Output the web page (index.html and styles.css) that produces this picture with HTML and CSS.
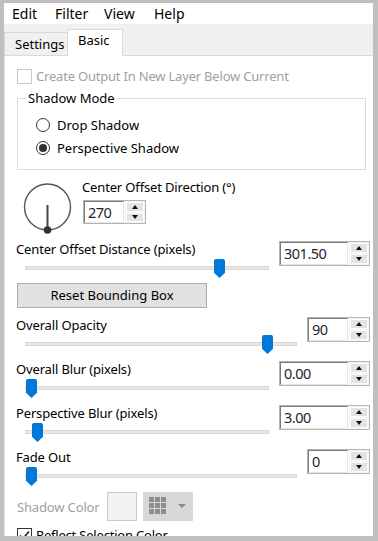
FILE: index.html
```html
<!DOCTYPE html>
<html>
<head>
<meta charset="utf-8">
<link rel="stylesheet" href="styles.css">
</head>
<body>
<div class="win">
  <div class="menubar">
    <span class="mi m-edit">Edit</span><span class="mi m-filter">Filter</span><span class="mi m-view">View</span><span class="mi">Help</span>
  </div>
  <div class="tabstrip">
    <div class="tab">Settings</div>
    <div class="tab active">Basic</div>
  </div>
  <div class="panel">
    <div class="check disabled"><span class="box"></span><span>Create Output In New Layer Below Current</span></div>

    <fieldset class="group">
      <legend>Shadow Mode</legend>
      <div class="radio first"><span class="rb"></span><span>Drop Shadow</span></div>
      <div class="radio"><span class="rb on"></span><span>Perspective Shadow</span></div>
    </fieldset>

    <div class="dialrow">
      <svg class="dial" width="50" height="54" viewBox="0 0 50 54">
        <circle cx="25.5" cy="26" r="23" fill="none" stroke="#555" stroke-width="1.4"/>
        <line x1="25.5" y1="24" x2="25.5" y2="48" stroke="#444" stroke-width="2"/>
        <circle cx="25.5" cy="49" r="3.8" fill="#333"/>
      </svg>
      <div class="dialside">
        <div class="lbl">Center Offset Direction (°)</div>
        <div class="spin narrow dialspin"><div class="val">270</div><div class="btns"><span class="up"></span><span class="dn"></span></div></div>
      </div>
    </div>

    <div class="srow">
      <div class="sl">
        <div class="lbl">Center Offset Distance (pixels)</div>
        <div class="track"><span class="thumb" style="left:188px"></span></div>
      </div>
      <div class="spin wide"><div class="val">301.50</div><div class="btns"><span class="up"></span><span class="dn"></span></div></div>
    </div>

    <div class="resetbtn">Reset Bounding Box</div>

    <div class="srow after-btn">
      <div class="sl">
        <div class="lbl">Overall Opacity</div>
        <div class="track"><span class="thumb" style="left:236px"></span></div>
      </div>
      <div class="spin narrow"><div class="val">90</div><div class="btns"><span class="up"></span><span class="dn"></span></div></div>
    </div>

    <div class="srow gap">
      <div class="sl">
        <div class="lbl">Overall Blur (pixels)</div>
        <div class="track"><span class="thumb" style="left:0px"></span></div>
      </div>
      <div class="spin wide"><div class="val">0.00</div><div class="btns"><span class="up"></span><span class="dn"></span></div></div>
    </div>

    <div class="srow gap">
      <div class="sl">
        <div class="lbl">Perspective Blur (pixels)</div>
        <div class="track"><span class="thumb" style="left:6px"></span></div>
      </div>
      <div class="spin wide"><div class="val">3.00</div><div class="btns"><span class="up"></span><span class="dn"></span></div></div>
    </div>

    <div class="srow gap">
      <div class="sl">
        <div class="lbl">Fade Out</div>
        <div class="track"><span class="thumb" style="left:0px"></span></div>
      </div>
      <div class="spin narrow"><div class="val">0</div><div class="btns"><span class="up"></span><span class="dn"></span></div></div>
    </div>

    <div class="colorrow">
      <span class="clabel">Shadow Color</span>
      <span class="swatch"></span>
      <span class="picker">
        <svg width="46" height="29" viewBox="0 0 46 29">
          <g fill="#8e8e8e">
            <rect x="6" y="5" width="5" height="5"/><rect x="12" y="5" width="5" height="5"/><rect x="18" y="5" width="5" height="5"/>
            <rect x="6" y="11" width="5" height="5"/><rect x="12" y="11" width="5" height="5"/><rect x="18" y="11" width="5" height="5"/>
            <rect x="6" y="17" width="5" height="5"/><rect x="12" y="17" width="5" height="5"/><rect x="18" y="17" width="5" height="5"/>
          </g>
          <path d="M35 12 L43 12 L39 16 Z" fill="#8a8a8a"/>
        </svg>
      </span>
    </div>

    <div class="check reflect"><span class="box checked">
      <svg width="13" height="13" viewBox="0 0 13 13"><path d="M2 6.5 L5 9.5 L11 2.5" fill="none" stroke="#222" stroke-width="1.6"/></svg>
    </span><span>Reflect Selection Color</span></div>
  </div>
</div>
</body>
</html>
```

FILE: styles.css
```css
* { box-sizing: border-box; }
html, body { margin: 0; padding: 0; }
body {
  font-family: "Noto Sans", "DejaVu Sans", sans-serif;
  font-size: 13px;
  color: #000;
  background: #bfbfbf;
}
.win {
  width: 378px;
  height: 541px;
  border-style: solid;
  border-color: #bfbfbf;
  border-width: 3px 5px 5px 4px;
  background: #fff;
  display: flex;
  flex-direction: column;
  overflow: hidden;
}
.menubar {
  height: 21px;
  flex: none;
  display: flex;
  padding-left: 8px;
  font-size: 14px;
  line-height: 21px;
  background: #fff;
}
.mi { padding-left: 0; }
.m-edit { width: 43px; }
.m-filter { width: 49px; }
.m-view { width: 50px; }

.tabstrip {
  height: 31px;
  flex: none;
  background: #f0f0f0;
  display: flex;
  align-items: flex-end;
}
.tab {
  width: 64px;
  height: 23px;
  border: 1px solid #d9d9d9;
  border-bottom: none;
  padding: 3px 0 0 10px;
  line-height: 16px;
  background: #f0f0f0;
}
.tab.active {
  width: 56px;
  height: 27px;
  margin-left: -1px;
  margin-bottom: -1px;
  padding-top: 2px;
  background: #fff;
  position: relative;
  z-index: 1;
}

.panel {
  flex: 1;
  min-height: 0;
  border-top: 1px solid #d9d9d9;
  border-left: 1px solid #e2e2e2;
  padding: 12px 3px 0 12px;
  display: flex;
  flex-direction: column;
  overflow: hidden;
}

.check {
  display: flex;
  align-items: center;
  height: 16px;
  line-height: 16px;
  flex: none;
  letter-spacing: -0.2px;
}
.check .box {
  width: 15px;
  height: 15px;
  border: 1px solid #333;
  background: #fff;
  margin-right: 4px;
  display: flex;
  align-items: center;
  justify-content: center;
}
.check.disabled { color: #a0a0a0; }
.check.disabled .box { border-color: #c8c8c8; }

.group {
  margin: 6px 4px 0 0;
  padding: 0 0 13px 0;
  border: 1px solid #dcdcdc;
  min-width: 0;
  flex: none;
}
.group legend {
  margin-left: 8px;
  padding: 0 2px;
  line-height: 16px;
}
.radio {
  display: flex;
  align-items: center;
  height: 16px;
  line-height: 16px;
  margin: 7px 0 0 18px;
}
.radio.first { margin-top: 11px; }
.rb {
  width: 14px;
  height: 14px;
  border: 1px solid #333;
  border-radius: 50%;
  margin-right: 7px;
  display: flex;
  align-items: center;
  justify-content: center;
}
.rb.on::after {
  content: "";
  width: 8px;
  height: 8px;
  border-radius: 50%;
  background: #333;
}

.dialrow {
  display: flex;
  height: 56px;
  margin-top: 9px;
  flex: none;
}
.dial { margin: 2px 0 0 5px; flex: none; }
.dialside { margin-left: 10px; }
.lbl {
  line-height: 16px;
  margin-left: -1px;
  white-space: nowrap;
  letter-spacing: -0.15px;
}
.dialside .lbl { margin-left: 0; }
.spin.dialspin { margin: 5px 0 0 1px; height: 24px; }

.spin {
  display: flex;
  height: 25px;
  border: 1px solid #b4b4b4;
  background: #fff;
  flex: none;
}
.spin.wide { width: 91px; }
.spin.narrow { width: 63px; }
.spin .val {
  flex: 1;
  border-top: 1px solid #7a7a7a;
  border-left: 1px solid #7a7a7a;
  border-right: 1px solid #e6e6e6;
  border-bottom: 1px solid #e6e6e6;
  padding-left: 3px;
  font-size: 14.5px;
  letter-spacing: -0.5px;
  line-height: 21px;
  color: #1e2430;
}
.spin .btns {
  width: 20px;
  display: flex;
  flex-direction: column;
  gap: 1px;
  padding: 1px;
  margin-left: 1px;
  background: #f4f4f4;
}
.spin .btns span {
  flex: 1;
  background: #e3e3e3;
  border: 1px solid #fdfdfd;
  display: flex;
  align-items: center;
  justify-content: center;
}
.spin .btns .up::after {
  content: "";
  border-left: 3.5px solid transparent;
  border-right: 3.5px solid transparent;
  border-bottom: 4px solid #111;
}
.spin .btns .dn::after {
  content: "";
  border-left: 3.5px solid transparent;
  border-right: 3.5px solid transparent;
  border-top: 4px solid #111;
}

.srow {
  display: flex;
  align-items: flex-start;
  height: 29px;
  margin-top: 6px;
  flex: none;
}
.srow.after-btn { margin-top: 9px; }
.srow.gap { margin-top: 15px; }
.sl { flex: 1; margin-right: 10px; min-width: 0; }
.track {
  position: relative;
  height: 4px;
  margin: 9px 0 0 8px;
  background: #e7e7e7;
  border: 1px solid #d8d8d8;
}
.thumb {
  position: absolute;
  top: -8px;
  width: 11px;
  height: 19px;
  background: #0078d7;
  clip-path: polygon(0 0, 100% 0, 100% 72%, 50% 100%, 0 72%);
  border-radius: 2px 2px 0 0;
}

.resetbtn {
  width: 190px;
  height: 25px;
  margin-top: 13px;
  background: #e1e1e1;
  border: 1px solid #adadad;
  text-align: center;
  line-height: 23px;
  flex: none;
}

.colorrow {
  display: flex;
  align-items: center;
  height: 29px;
  margin-top: 14px;
  flex: none;
}
.clabel {
  width: 90px;
  color: #a0a0a0;
  letter-spacing: -0.15px;
}
.swatch {
  width: 30px;
  height: 29px;
  border: 1px solid #c8c8c8;
  background: #f2f2f2;
}
.picker {
  width: 50px;
  height: 29px;
  margin-left: 6px;
  background: #d7d7d7;
  display: flex;
}
.reflect { margin-top: 6px; }
.reflect .box { border-color: #333; }
```
